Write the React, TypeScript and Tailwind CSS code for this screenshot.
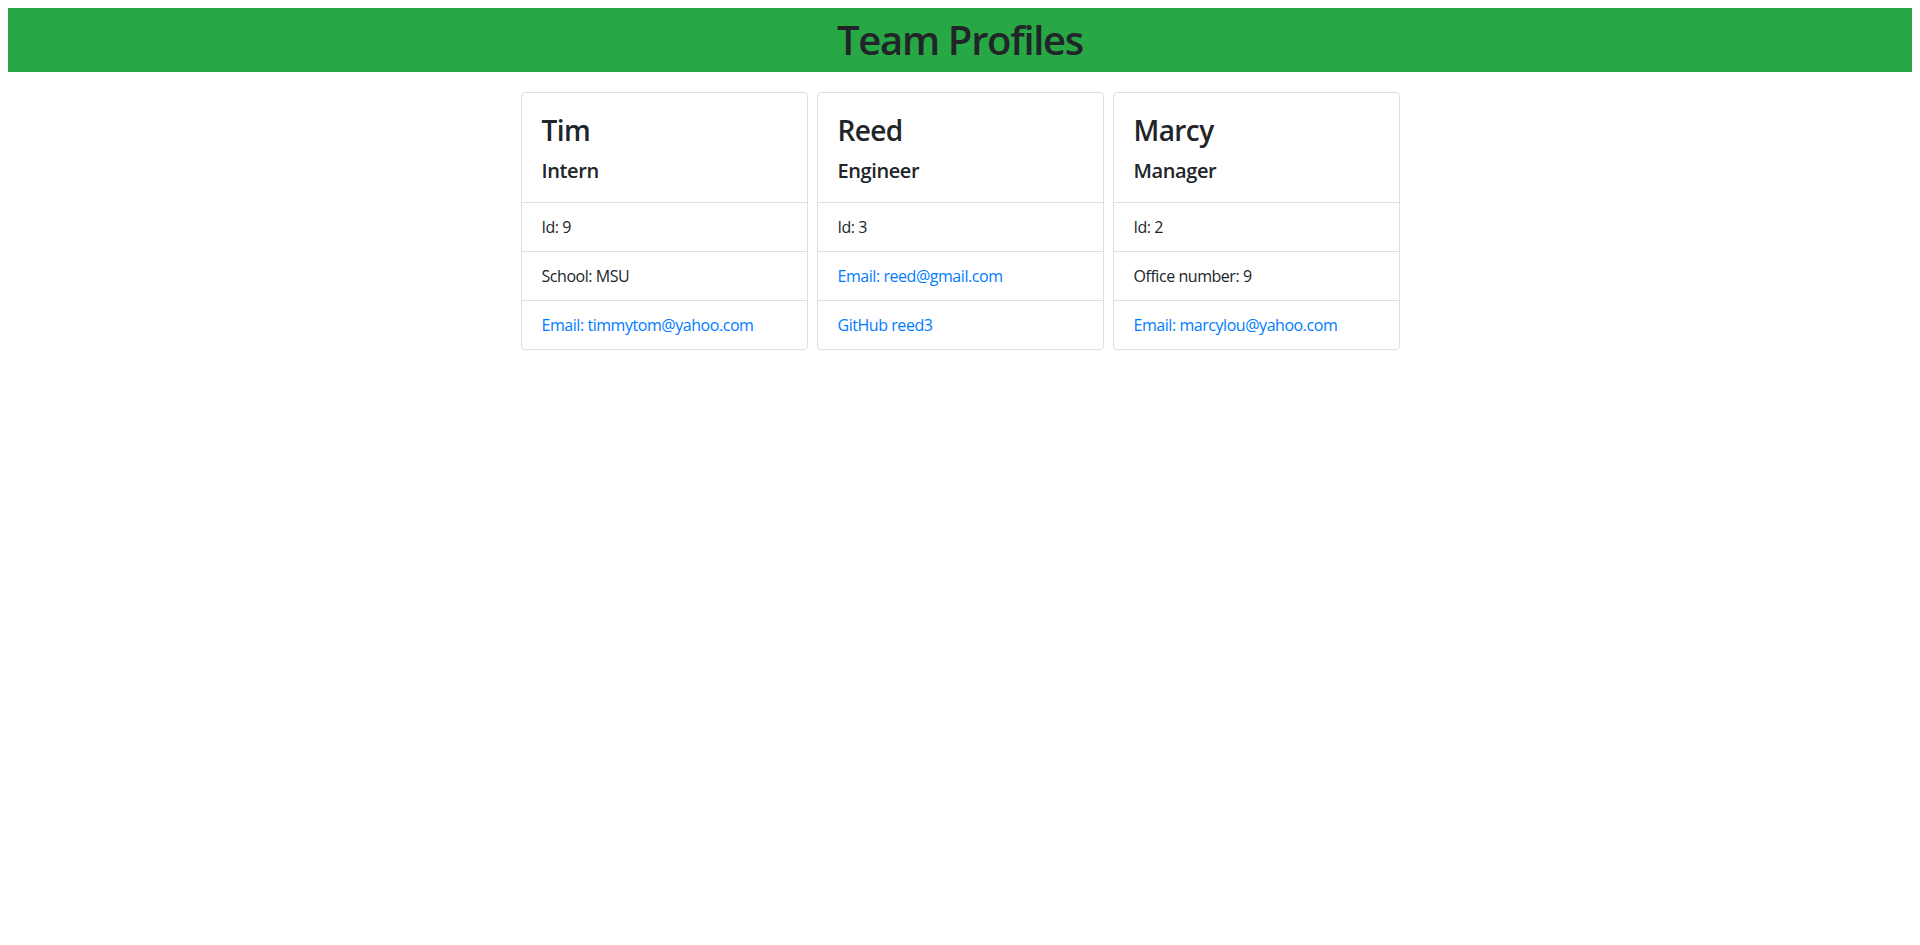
import React from 'react';

type Row = { text: string; link?: boolean };

interface Member {
  name: string;
  role: string;
  rows: Row[];
}

const team: Member[] = [
  {
    name: 'Tim',
    role: 'Intern',
    rows: [
      { text: 'Id: 9' },
      { text: 'School: MSU' },
      { text: 'Email: timmytom@yahoo.com', link: true },
    ],
  },
  {
    name: 'Reed',
    role: 'Engineer',
    rows: [
      { text: 'Id: 3' },
      { text: 'Email: reed@gmail.com', link: true },
      { text: 'GitHub reed3', link: true },
    ],
  },
  {
    name: 'Marcy',
    role: 'Manager',
    rows: [
      { text: 'Id: 2' },
      { text: 'Office number: 9' },
      { text: 'Email: marcylou@yahoo.com', link: true },
    ],
  },
];

const ProfileCard: React.FC<{ member: Member }> = ({ member }) => (
  <div className="w-[287px] border border-[#dfdfdf] rounded bg-white">
    <div className="px-5 pt-5 pb-[19px]">
      <h3 className="text-[28px] leading-[34px] font-semibold tracking-[-0.6px] mb-3">{member.name}</h3>
      <h5 className="text-[20px] leading-6 font-semibold tracking-[-0.4px]">{member.role}</h5>
    </div>
    <ul>
      {member.rows.map((row) => (
        <li
          key={row.text}
          className={`border-t border-[#dfdfdf] px-5 py-3 text-base leading-6 tracking-[-0.45px] ${row.link ? 'text-[#007bff]' : 'text-[#212529]'}`}
        >
          {row.text}
        </li>
      ))}
    </ul>
  </div>
);

export default function App() {
  return (
    <div className="min-h-screen bg-white p-2 text-[#212529] font-['Open_Sans',sans-serif]">
      <header className="bg-[#28a745] h-16 flex items-center justify-center">
        <h1 className="text-[40px] leading-[48px] font-semibold tracking-[-1.3px]">Team Profiles</h1>
      </header>

      <main className="flex justify-center items-start gap-[9px] mt-5">
        {team.map((m) => (
          <ProfileCard key={m.name} member={m} />
        ))}
      </main>
    </div>
  );
}
